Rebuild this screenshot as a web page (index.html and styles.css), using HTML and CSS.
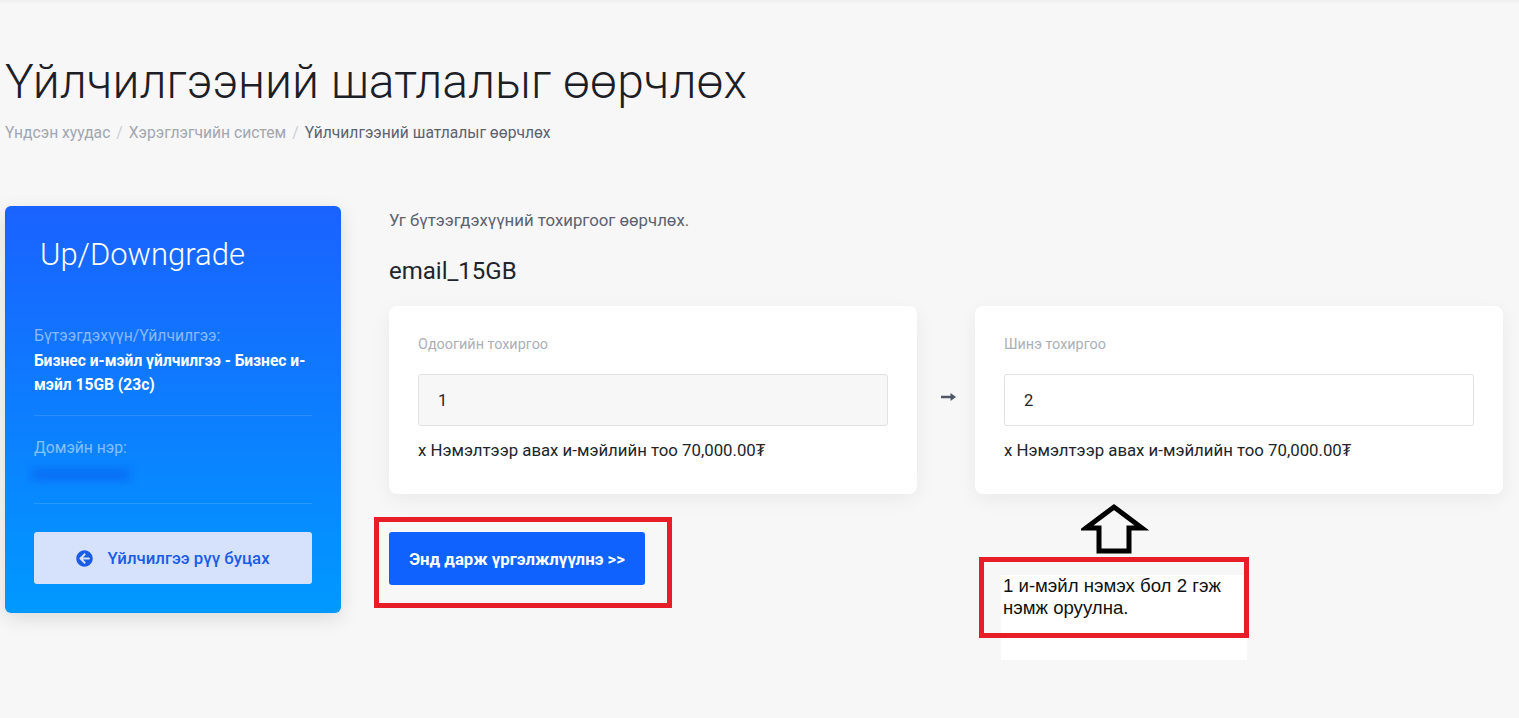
FILE: index.html
```html
<!DOCTYPE html>
<html lang="mn">
<head>
    <meta charset="UTF-8">
    <title>Үйлчилгээний шатлалыг өөрчлөх</title>
    <link rel="stylesheet" href="styles.css">
</head>

<body>

<div class="topbar"></div>

<div class="page">
    <h1>Үйлчилгээний шатлалыг өөрчлөх</h1>
    <div class="breadcrumb">
        <a href="#">Үндсэн хуудас</a>
        <span class="sep">/</span>
        <a href="#">Хэрэглэгчийн систем</a>
        <span class="sep">/</span>
        <span class="current">Үйлчилгээний шатлалыг өөрчлөх</span>
    </div>

    <div class="content">
        <!-- Sidebar -->
        <div class="sidebar">
            <h3>Up/Downgrade</h3>
            <div class="side-block first">
                <div class="side-label">Бүтээгдэхүүн/Үйлчилгээ:</div>
                <div class="side-value">Бизнес и-мэйл үйлчилгээ - Бизнес и-мэйл 15GB (23с)</div>
            </div>
            <div class="side-block">
                <div class="side-label">Домэйн нэр:</div>
                <div class="side-blur"></div>
            </div>
            <a href="#" class="back-btn">
                <svg class="back-icon" viewBox="0 0 512 512"><path fill="#1a5ce6" d="M256 504C119 504 8 393 8 256S119 8 256 8s248 111 248 248-111 248-248 248zm28.900-143.600L209.400 288H392c13.300 0 24-10.700 24-24v-16c0-13.300-10.700-24-24-24H209.400l75.500-72.400c9.700-9.300 9.900-24.800.4-34.300l-11-10.900c-9.400-9.400-24.600-9.400-33.900 0L107.700 239c-9.400 9.400-9.400 24.600 0 33.900l132.700 132.700c9.400 9.400 24.600 9.400 33.900 0l11-10.900c9.500-9.500 9.300-25-.4-34.300z"/></svg>
                <span>Үйлчилгээ рүү буцах</span>
            </a>
        </div>

        <!-- Main -->
        <div class="main">
            <p class="intro">Уг бүтээгдэхүүний тохиргоог өөрчлөх.</p>
            <h4>email_15GB</h4>

            <div class="config-row">
                <div class="card">
                    <div class="card-title">Одоогийн тохиргоо</div>
                    <input class="field readonly" type="text" value="1" readonly>
                    <div class="card-note">x Нэмэлтээр авах и-мэйлийн тоо 70,000.00₮</div>
                </div>
                <div class="arrow">
                    <svg width="15" height="10" viewBox="0 0 15 10"><path fill="#4f5666" d="M0 3.800h9.500V1L15 5 9.500 9V6.200H0z"/></svg>
                </div>
                <div class="card">
                    <div class="card-title">Шинэ тохиргоо</div>
                    <input class="field" type="text" value="2">
                    <div class="card-note">x Нэмэлтээр авах и-мэйлийн тоо 70,000.00₮</div>
                </div>
            </div>

            <button class="continue-btn" type="button">Энд дарж үргэлжлүүлнэ &gt;&gt;</button>
        </div>
    </div>
</div>

<!-- Annotations pasted over the screenshot -->
<div class="mark mark-btn"></div>
<svg class="mark-arrow" width="68" height="52" viewBox="0 0 68 52"><path fill="none" stroke="#000" stroke-width="5" d="M5 25 33 4l28 21H48v23H18V25z"/></svg>
<div class="note">
    <div class="note-text">1 и-мэйл нэмэх бол 2 гэж нэмж оруулна.</div>
</div>
<div class="mark mark-note"></div>

</body>
</html>
```

FILE: styles.css
```css
* {
    box-sizing: border-box;
}
body {
    font-family: Roboto, "Noto Sans", sans-serif;
    background: #f7f7f7;
    color: #21252b;
    margin: 0;
    padding: 0;
    height: 718px;
    overflow: hidden;
}
.topbar {
    height: 4px;
    background: linear-gradient(#efefef, #f7f7f7);
}
.page {
    padding: 49px 16px 0 5px;
}
h1 {
    font-size: 48px;
    font-weight: 300;
    line-height: 58px;
    margin: 0;
    color: #1c2026;
}
.breadcrumb {
    margin-top: 12px;
    font-size: 15.650px;
    line-height: 20px;
    color: #a2a6af;
    display: flex;
    gap: 6px;
}
.breadcrumb a {
    color: #a2a6af;
    text-decoration: none;
}
.breadcrumb .sep {
    color: #ccced3;
}
.breadcrumb .current {
    color: #5c6270;
}
.content {
    display: flex;
    gap: 48px;
    margin-top: 63px;
}
.sidebar {
    width: 336px;
    height: 407px;
    flex-shrink: 0;
    padding: 30px 29px 0;
    background: linear-gradient(#1a62ff, #0099ff);
    border-radius: 6px;
    box-shadow: 0 5px 20px rgba(0, 0, 0, 0.12);
    color: #fff;
}
.sidebar h3 {
    font-size: 31px;
    font-weight: 300;
    line-height: 38px;
    margin: 0 0 0 6px;
}
.side-block {
    padding-bottom: 16px;
    margin-bottom: 28px;
    border-bottom: 1px solid rgba(255, 255, 255, 0.12);
}
.side-block.first {
    margin-top: 49px;
    padding-bottom: 18px;
    margin-bottom: 19px;
}
.side-label {
    font-size: 15.700px;
    line-height: 26px;
    color: rgba(255, 255, 255, 0.5);
}
.side-value {
    font-size: 15.600px;
    font-weight: 700;
    line-height: 24px;
}
.side-blur {
    position: relative;
    width: 108px;
    height: 19px;
    margin: 4px 0 3px -7px;
    background: rgba(0, 90, 240, 0.05);
}
.side-blur::before {
    content: "";
    position: absolute;
    inset: 4px 6px;
    background: #0a6ef6;
    filter: blur(4px);
}
.back-btn {
    display: flex;
    align-items: center;
    justify-content: center;
    gap: 14px;
    height: 52px;
    background: #d6e2fb;
    border-radius: 3px;
    color: #1a5ce6;
    font-size: 16.800px;
    font-weight: 500;
    text-decoration: none;
}
.back-icon {
    width: 17px;
    height: 17px;
}
.main {
    flex: 1;
}
.intro {
    margin: 4px 0 0;
    font-size: 16.800px;
    line-height: 20px;
    color: #5c6270;
}
h4 {
    font-size: 24px;
    font-weight: 400;
    line-height: 28px;
    margin: 27px 0 21px;
}
.config-row {
    display: flex;
    align-items: flex-start;
}
.card {
    width: 528px;
    height: 188px;
    padding: 30px 29px 0;
    background: #fff;
    border-radius: 8px;
    box-shadow: 0 5px 20px rgba(0, 0, 0, 0.06);
}
.card-title {
    font-size: 14.400px;
    line-height: 18px;
    color: #abafb7;
}
.field {
    display: block;
    width: 100%;
    height: 52px;
    margin-top: 20px;
    padding: 0 19px;
    font-family: inherit;
    font-size: 16.500px;
    color: #21252b;
    background: #fff;
    border: 1px solid #e0e1e3;
    border-radius: 3px;
}
.field.readonly {
    background: #f7f7f7;
}
.card-note {
    margin-top: 14px;
    font-size: 16.800px;
    line-height: 20px;
    color: #21252b;
}
.arrow {
    width: 58px;
    height: 188px;
    display: flex;
    justify-content: center;
    padding: 86px 0 0 4px;
}
.continue-btn {
    display: block;
    width: 256px;
    height: 53px;
    margin-top: 38px;
    background: #1062fe;
    color: #fff;
    font-family: inherit;
    font-size: 16.800px;
    font-weight: 700;
    border: 0;
    border-radius: 3px;
    cursor: pointer;
}
.mark {
    position: absolute;
    border: 5px solid #e71d28;
}
.mark-btn {
    left: 374px;
    top: 517px;
    width: 298px;
    height: 91px;
}
.mark-note {
    left: 979px;
    top: 557px;
    width: 270px;
    height: 81px;
}
.mark-arrow {
    position: absolute;
    left: 1081px;
    top: 503px;
}
.note {
    position: absolute;
    left: 1001px;
    top: 575px;
    width: 246px;
    height: 85px;
    background: #fff;
}
.note-text {
    padding: 0 2px;
    font-family: "Liberation Sans", Arial, sans-serif;
    font-size: 18.600px;
    line-height: 22px;
    color: #111;
}
```
